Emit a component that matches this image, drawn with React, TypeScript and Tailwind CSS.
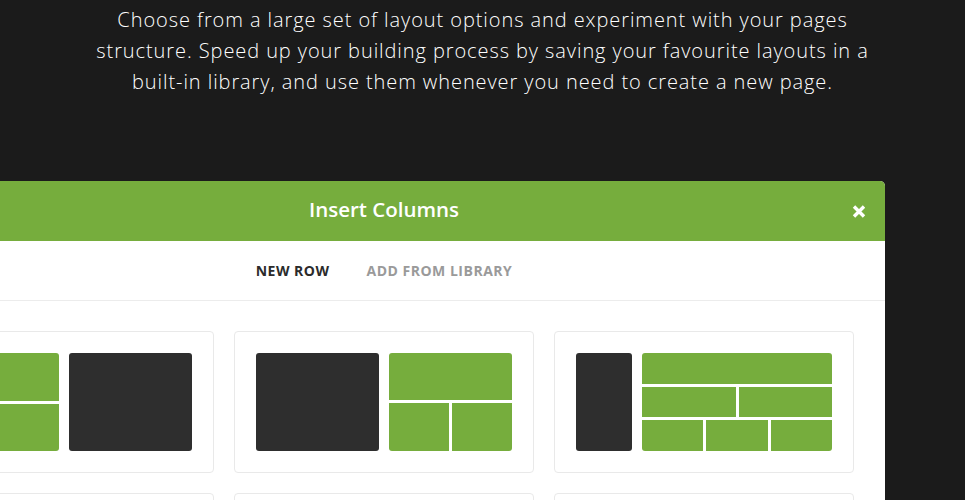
import React from "react";

const G = "bg-[#76ad3d]";
const D = "bg-[#2e2e2e]";

function Card({ children }: { children: React.ReactNode }) {
  return (
    <div className="h-[142px] rounded-[4px] border border-[#e9e9e9] bg-white px-[21px] pt-[21px]">
      <div className="flex h-[98px] gap-[10px]">{children}</div>
    </div>
  );
}

export default function App() {
  return (
    <div className="h-[500px] w-[965px] overflow-hidden bg-[#1b1b1b]">
      <p
        className="pt-[4px] text-center text-[20px] font-light leading-[31px] tracking-[0.92px] text-white"
        style={{ fontFamily: '"Open Sans", sans-serif' }}
      >
        Choose from a large set of layout options and experiment with your pages
        <br />
        structure. Speed up your building process by saving your favourite layouts in a
        <br />
        built-in library, and use them whenever you need to create a new page.
      </p>
      <div
        className="ml-[-117px] mt-[84px] w-[1002px] overflow-hidden rounded-tr-[5px] bg-white"
        style={{ fontFamily: '"Open Sans", sans-serif' }}
      >
        <div className={`relative flex h-[60px] items-center justify-center pb-[3px] ${G}`}>
          <span className="text-[20.5px] font-semibold text-white">Insert Columns</span>
          <svg
            className="absolute right-[19px] top-[24px]"
            width="14"
            height="13"
            viewBox="0 0 14 13"
          >
            <path d="M2 1.5 L12 11.5 M12 1.5 L2 11.5" stroke="white" strokeWidth="3.4" strokeLinecap="butt" />
          </svg>
        </div>
        <div className="flex h-[60px] items-center justify-center gap-[37px] border-b border-[#ececec] text-[14px] font-bold tracking-[0.5px]">
          <span className="text-[#2b2b2b]">NEW ROW</span>
          <span className="text-[#9a9a9a]">ADD FROM LIBRARY</span>
        </div>
        <div className="grid grid-cols-[300px_300px_300px] gap-x-[20px] gap-y-[20px] pl-[31px] pt-[30px]">
          <Card>
            <div className="flex w-[123px] flex-col gap-[3px] overflow-hidden rounded-[3px]">
              <div className={`flex-1 ${G}`} />
              <div className={`flex-1 ${G}`} />
            </div>
            <div className={`w-[123px] rounded-[3px] ${D}`} />
          </Card>
          <Card>
            <div className={`w-[123px] rounded-[3px] ${D}`} />
            <div className="flex w-[123px] flex-col gap-[3px] overflow-hidden rounded-[3px]">
              <div className={`h-[47px] ${G}`} />
              <div className="flex flex-1 gap-[3px]">
                <div className={`flex-1 ${G}`} />
                <div className={`flex-1 ${G}`} />
              </div>
            </div>
          </Card>
          <Card>
            <div className={`w-[56px] rounded-[3px] ${D}`} />
            <div className="flex w-[190px] flex-col gap-[3px] overflow-hidden rounded-[3px]">
              <div className={`flex-1 ${G}`} />
              <div className="flex flex-1 gap-[3px]">
                <div className={`flex-1 ${G}`} />
                <div className={`flex-1 ${G}`} />
              </div>
              <div className="flex flex-1 gap-[3px]">
                <div className={`flex-1 ${G}`} />
                <div className={`flex-1 ${G}`} />
                <div className={`flex-1 ${G}`} />
              </div>
            </div>
          </Card>
          <Card>
            <div />
          </Card>
          <Card>
            <div />
          </Card>
          <Card>
            <div />
          </Card>
        </div>
      </div>
    </div>
  );
}
